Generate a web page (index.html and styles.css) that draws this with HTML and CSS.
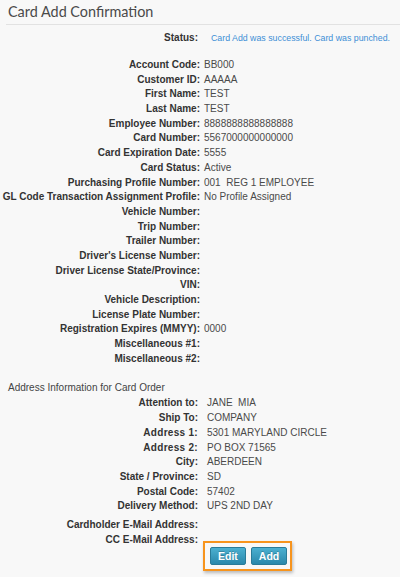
FILE: index.html
```html
<!DOCTYPE html>
<html>
<head>
<meta charset="utf-8">
<link rel="stylesheet" href="styles.css">
</head>
<body>
<div class="page">
  <h1 class="title">Card Add Confirmation</h1>
  <div class="status-row">
    <div class="label">Status:</div>
    <div class="status-value">Card Add was successful. Card was punched.</div>
  </div>
  <div class="fields">
    <div class="label">Account Code:</div><div class="value">BB000</div>
    <div class="label">Customer ID:</div><div class="value">AAAAA</div>
    <div class="label">First Name:</div><div class="value">TEST</div>
    <div class="label">Last Name:</div><div class="value">TEST</div>
    <div class="label">Employee Number:</div><div class="value">8888888888888888</div>
    <div class="label">Card Number:</div><div class="value">5567000000000000</div>
    <div class="label">Card Expiration Date:</div><div class="value">5555</div>
    <div class="label">Card Status:</div><div class="value">Active</div>
    <div class="label">Purchasing Profile Number:</div><div class="value">001&nbsp; REG 1 EMPLOYEE</div>
    <div class="label">GL Code Transaction Assignment Profile:</div><div class="value">No Profile Assigned</div>
    <div class="label">Vehicle Number:</div><div class="value"></div>
    <div class="label">Trip Number:</div><div class="value"></div>
    <div class="label">Trailer Number:</div><div class="value"></div>
    <div class="label">Driver's License Number:</div><div class="value"></div>
    <div class="label">Driver License State/Province:</div><div class="value"></div>
    <div class="label">VIN:</div><div class="value"></div>
    <div class="label">Vehicle Description:</div><div class="value"></div>
    <div class="label">License Plate Number:</div><div class="value"></div>
    <div class="label">Registration Expires (MMYY):</div><div class="value">0000</div>
    <div class="label">Miscellaneous #1:</div><div class="value"></div>
    <div class="label">Miscellaneous #2:</div><div class="value"></div>
  </div>
  <div class="section-title">Address Information for Card Order</div>
  <div class="fields address">
    <div class="label">Attention to:</div><div class="value">JANE&nbsp; MIA</div>
    <div class="label">Ship To:</div><div class="value">COMPANY</div>
    <div class="label wide">Address 1:</div><div class="value">5301 MARYLAND CIRCLE</div>
    <div class="label wide">Address 2:</div><div class="value">PO BOX 71565</div>
    <div class="label">City:</div><div class="value">ABERDEEN</div>
    <div class="label">State / Province:</div><div class="value">SD</div>
    <div class="label">Postal Code:</div><div class="value">57402</div>
    <div class="label">Delivery Method:</div><div class="value">UPS 2ND DAY</div>
  </div>
  <div class="fields emails">
    <div class="label">Cardholder E-Mail Address:</div><div class="value"></div>
    <div class="label">CC E-Mail Address:</div><div class="value"></div>
  </div>
  <div class="actions">
    <div class="button-box">
      <button class="btn">Edit</button>
      <button class="btn">Add</button>
    </div>
  </div>
</div>
</body>
</html>
```
FILE: styles.css
```css
html, body {
  margin: 0;
  padding: 0;
  background: #f8f8f8;
}
body {
  font-family: "Liberation Sans", Arial, sans-serif;
  font-size: 10px;
  color: #333;
}
.page {
  width: 400px;
  height: 577px;
  overflow: hidden;
}
.title {
  margin: 0 0 0 6px;
  padding: 1px 0 0 2px;
  height: 23px;
  font-family: Lato, sans-serif;
  font-weight: 400;
  font-size: 14.4px;
  line-height: 21px;
  color: #4a4a4a;
  border-bottom: 1px solid #e2e2e2;
}
.status-row {
  display: grid;
  grid-template-columns: 198px 1fr;
  column-gap: 13px;
  margin-top: 6px;
  line-height: 14px;
}
.status-value {
  font-size: 8.8px;
  color: #3d8fd6;
  white-space: nowrap;
}
.label {
  text-align: right;
  font-weight: bold;
  color: #333;
  white-space: nowrap;
}
.value {
  color: #4a4a4a;
  white-space: nowrap;
}
.fields {
  display: grid;
  grid-template-columns: 200px 1fr;
  column-gap: 4px;
  grid-auto-rows: 14.7px;
  line-height: 14.7px;
  margin-top: 13px;
}
.section-title {
  margin: 15px 0 0 8px;
  line-height: 14px;
  color: #444;
}
.fields.address {
  margin-top: 1px;
  grid-template-columns: 198px 1fr;
  column-gap: 9px;
}
.label.wide {
  letter-spacing: 0.3px;
}
.fields.emails {
  grid-template-columns: 198px 1fr;
  margin-top: 4px;
}
.actions {
  padding-left: 203px;
  margin-top: -6px;
}
.button-box {
  display: inline-flex;
  gap: 5px;
  padding: 4px 3px 4px 5px;
  border: 2px solid #f7941d;
  box-shadow: 1px 2px 3px rgba(0,0,0,0.25);
}
.btn {
  font-family: "Liberation Sans", Arial, sans-serif;
  font-size: 10.5px;
  font-weight: bold;
  color: #fff;
  border: 1px solid #2a7b98;
  border-radius: 2px;
  background: linear-gradient(#4bb0d0, #2a88ab);
  height: 18px;
  padding: 0 7px;
  line-height: 16px;
  text-shadow: 0 -1px 0 rgba(0,0,0,0.2);
}
```
